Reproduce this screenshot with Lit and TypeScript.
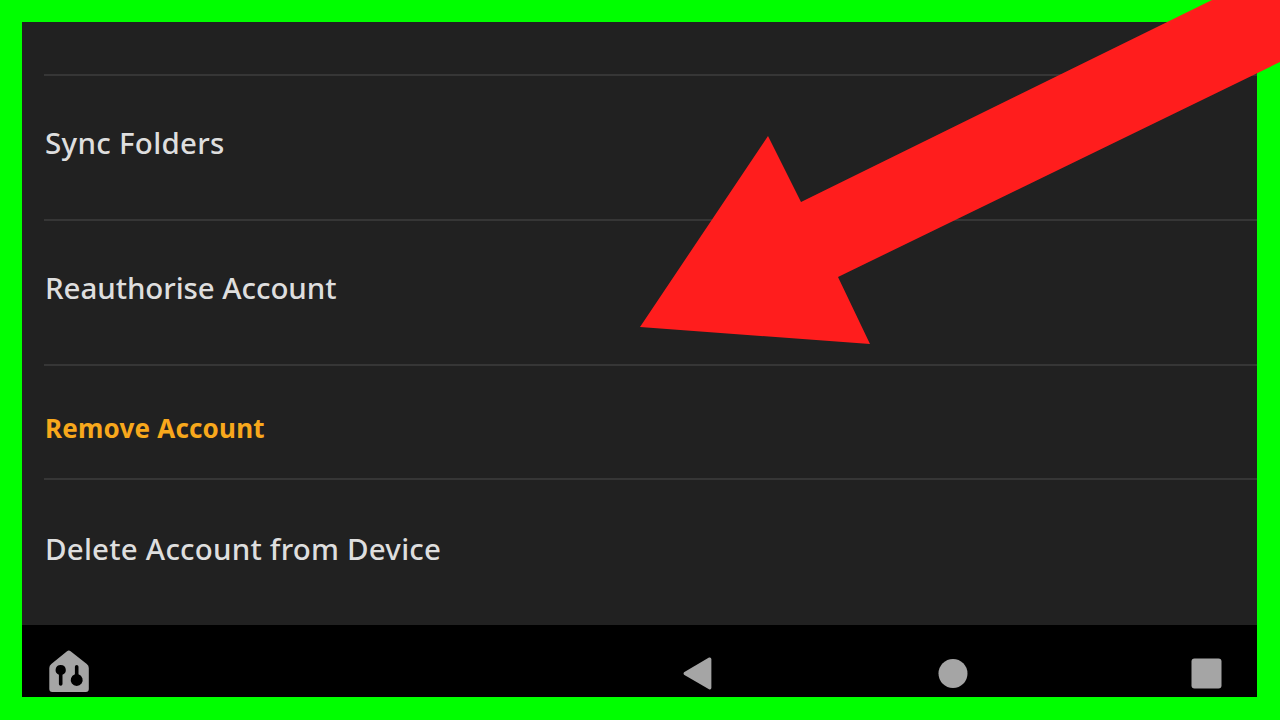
import { LitElement, html, css, svg } from "lit";
import { customElement } from "lit/decorators.js";

@customElement("app-root")
export class AppRoot extends LitElement {
  static styles = css`
    :host {
      display: block;
      width: 1280px;
      height: 720px;
      position: relative;
      overflow: hidden;
      box-sizing: border-box;
      background: #00ff00;
      padding: 22px 23px 23px 22px;
      font-family: "Noto Sans", "Liberation Sans", sans-serif;
    }
    .panel {
      height: 100%;
      display: flex;
      flex-direction: column;
      background: #212121;
    }
    .list {
      flex: 1;
      display: flex;
      flex-direction: column;
      padding-left: 22px;
    }
    .row {
      box-sizing: border-box;
      border-bottom: 2px solid #363636;
      display: flex;
      align-items: center;
      padding-left: 1px;
      color: #dedede;
      font-size: 29.5px;
      font-weight: 500;
      letter-spacing: 0.3px;
    }
    .spacer { height: 54px; padding: 0; }
    .sync { height: 145px; padding-bottom: 10px; }
    .reauth { height: 145px; padding-bottom: 11px; letter-spacing: -0.07px; }
    .remove {
      height: 114px;
      padding-top: 11px;
      color: #f8a81c;
      font-size: 26px;
      font-weight: 700;
      letter-spacing: 0.2px;
    }
    .delete { flex: 1; border-bottom: none; padding-bottom: 8px; letter-spacing: 0.22px; }
    .nav {
      height: 72px;
      background: #000;
      display: flex;
      align-items: flex-start;
      padding-left: 27px;
    }
    .nav svg { display: block; fill: #a5a5a5; }
    .home { margin-top: 25px; }
    .back { margin-left: 593px; margin-top: 32px; }
    .circle { margin-left: 226px; margin-top: 34px; }
    .square { margin-left: 223px; margin-top: 33px; }
    .arrow { position: absolute; left: 0; top: 0; display: block; }
  `;

  render() {
    return html`
      <div class="panel">
        <div class="list">
          <div class="row spacer"></div>
          <div class="row sync">Sync Folders</div>
          <div class="row reauth">Reauthorise Account</div>
          <div class="row remove">Remove Account</div>
          <div class="row delete">Delete Account from Device</div>
        </div>
        <div class="nav">
          <svg class="home" width="41" height="43" viewBox="0 0 41 43">
            <path fill-rule="evenodd" d="M19.8 0.4 Q20.7 0.4 21.6 1.2 L37.8 14 Q39.8 15.6 39.8 18 V39 Q39.8 42 36.8 42 H3.3 Q0.3 42 0.3 39 V18 Q0.3 15.6 2.3 14 L18 1.2 Q18.9 0.4 19.8 0.4 Z
              M11.7 15 A5 5 0 0 0 9.9 24.7 V34 Q9.9 35.8 11.7 35.8 Q13.5 35.8 13.5 34 V24.7 A5 5 0 0 0 11.7 15 Z
              M27.7 15 Q25.9 15 25.9 16.8 V24.3 A6 6 0 1 0 29.5 24.3 V16.8 Q29.5 15 27.7 15 Z"/>
          </svg>
          <svg class="back" width="29" height="33" viewBox="0 0 29 33">
            <path d="M26 0.6 Q28.4 0 28.4 2.5 V30.5 Q28.4 33 26 32.2 L1 17.8 Q0 16.5 1 15.2 Z"/>
          </svg>
          <svg class="circle" width="30" height="29" viewBox="0 0 30 29">
            <ellipse cx="15" cy="14.5" rx="14.5" ry="14.5"/>
          </svg>
          <svg class="square" width="31" height="31" viewBox="0 0 31 31">
            <rect x="0.5" y="0.5" width="30" height="30" rx="3"/>
          </svg>
        </div>
      </div>
      <svg class="arrow" width="1280" height="720" viewBox="0 0 1280 720">
        ${svg`<polygon fill="#ff1d1d" points="640,327 768,136 801,202 1212,0 1280,0 1280,62 838,277 870,344"/>`}
      </svg>
    `;
  }
}
